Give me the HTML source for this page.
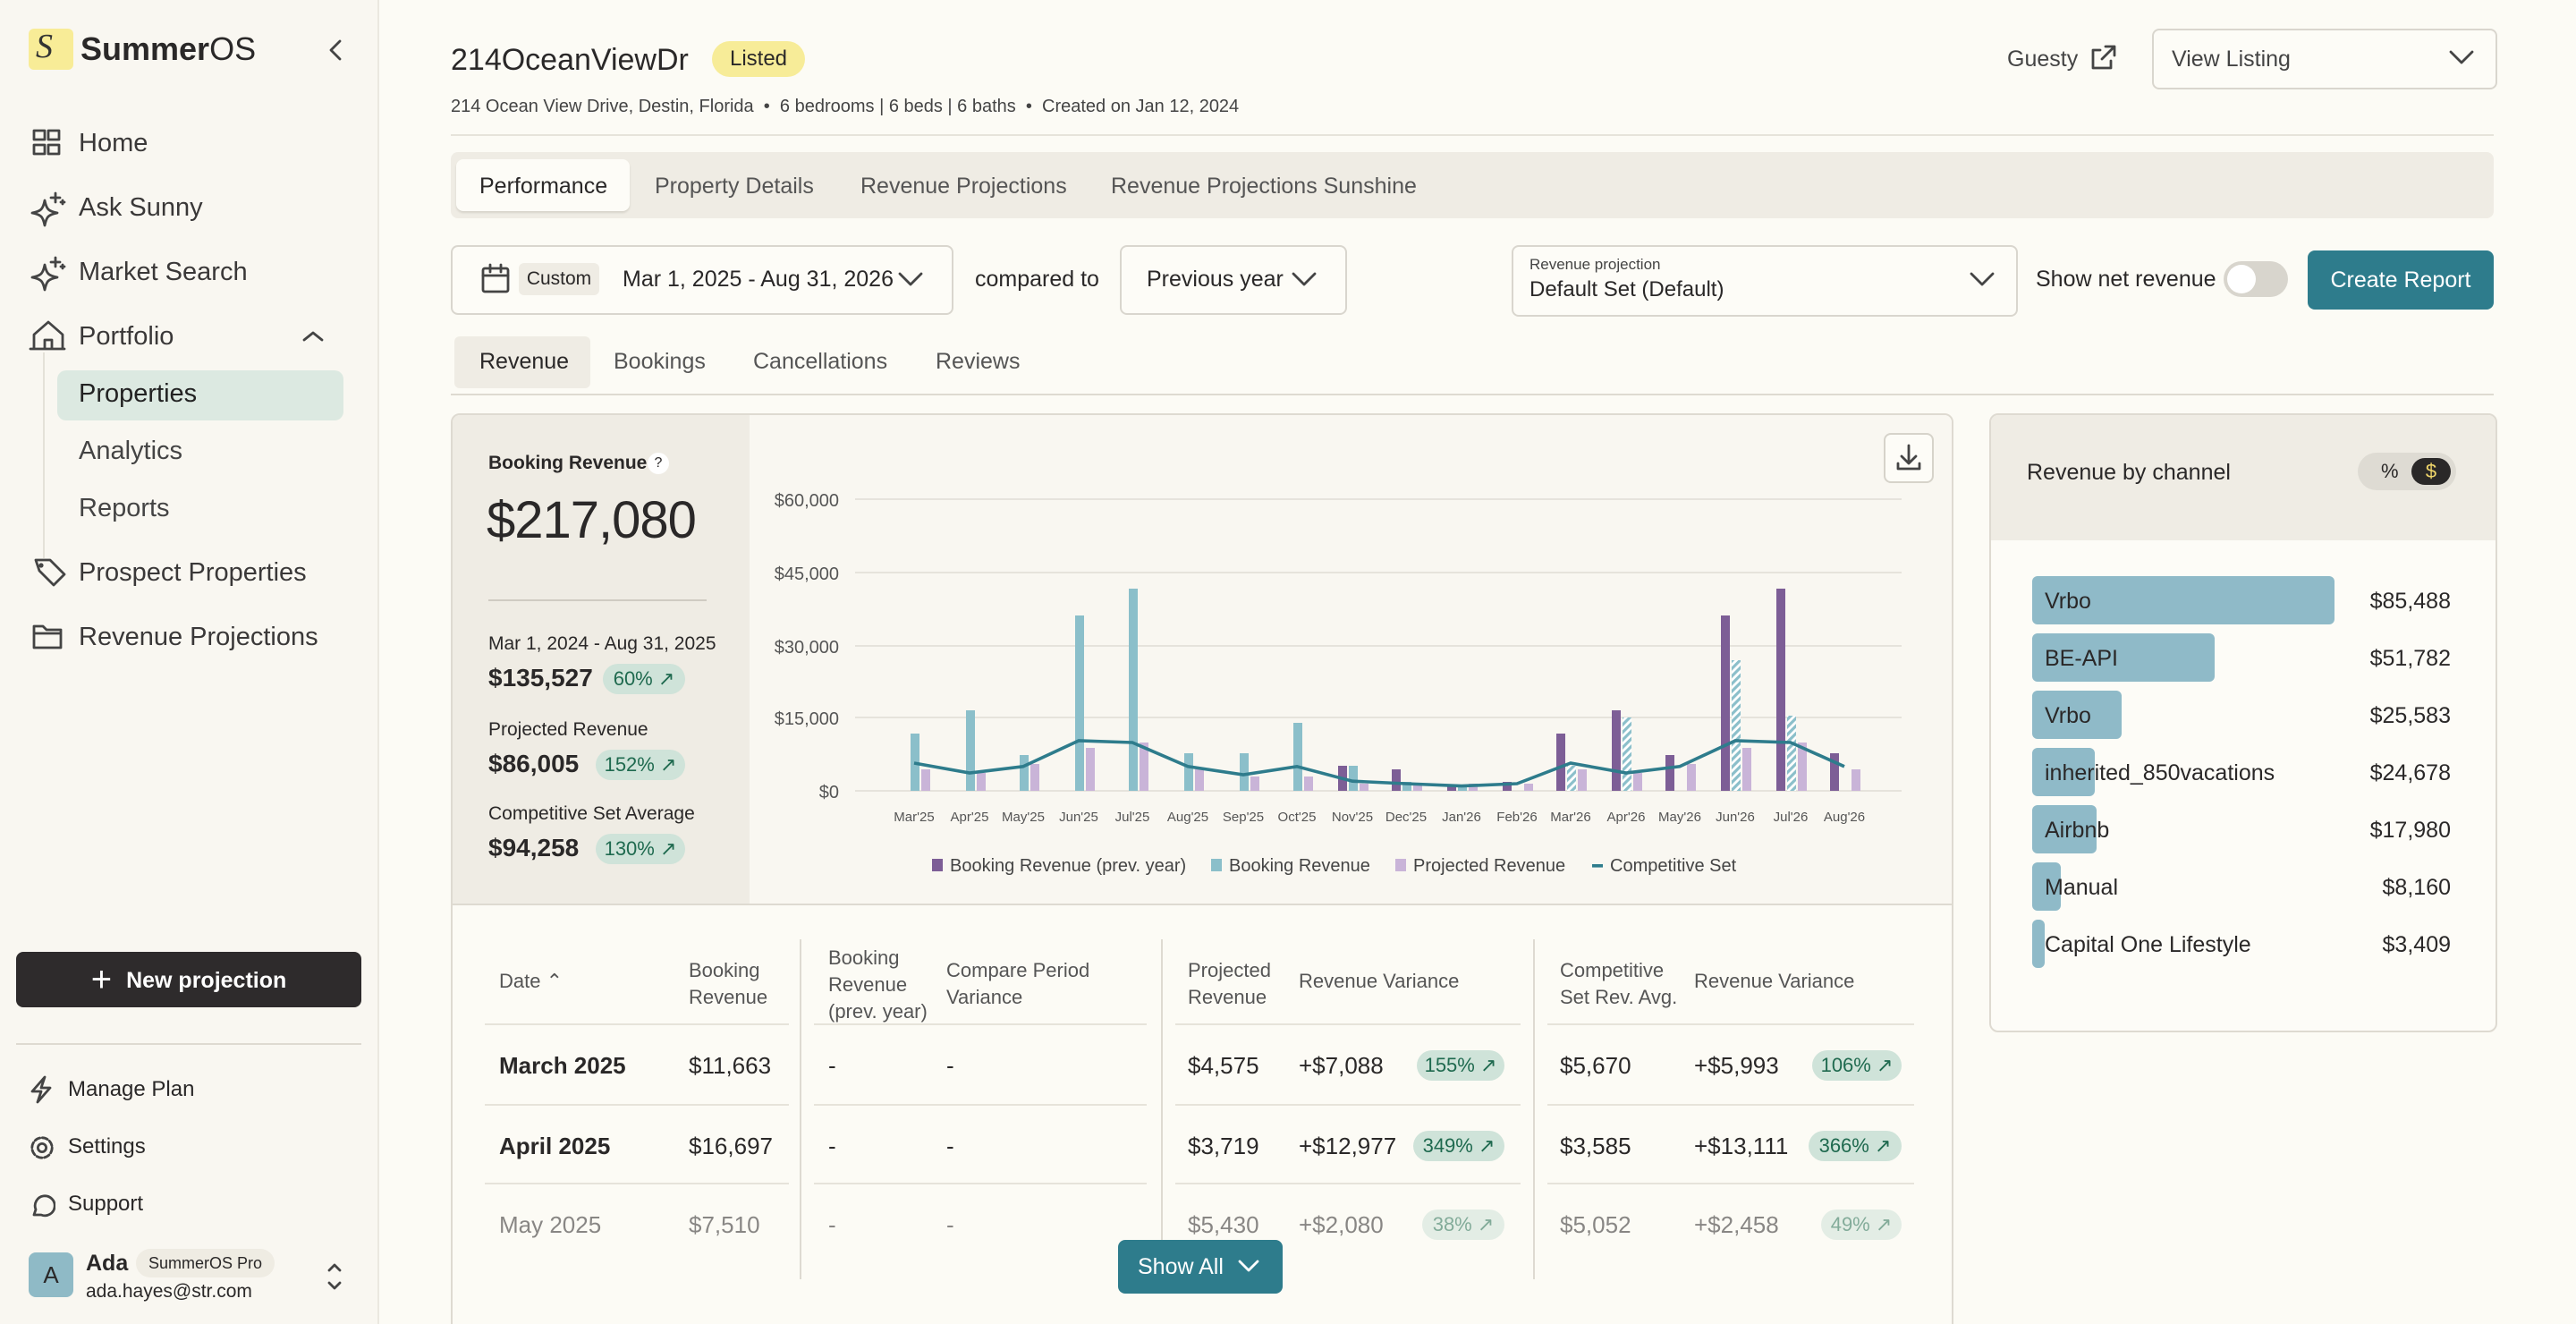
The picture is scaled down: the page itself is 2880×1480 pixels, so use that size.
<!DOCTYPE html>
<html><head><meta charset="utf-8"><style>
html,body{margin:0;padding:0;width:2880px;height:1480px;overflow:hidden;background:#fcfbf5}
#r{position:relative;width:1440px;height:740px;zoom:2;font-family:"Liberation Sans",sans-serif;color:#2a2828;overflow:hidden}
.a{position:absolute;white-space:nowrap}
.side{position:absolute;left:0;top:0;width:211px;height:740px;background:#f9f7f1;border-right:1px solid #ebe8e0}
.nav{position:absolute;left:44px;font-size:14.5px;color:#3a3838}
.ic{position:absolute;fill:none;stroke:#444;stroke-width:1.4;stroke-linecap:round;stroke-linejoin:round}
.box{position:absolute;border:1px solid #d9d6ce;border-radius:4px;background:#fdfcf7}
.g{color:#555}
.badge{position:absolute;background:#cfe3d9;color:#1f6a4f;border-radius:9px;font-size:11px;height:17px;line-height:17px;text-align:center}
.th{position:absolute;font-size:11px;color:#555;line-height:15px}
.td{position:absolute;font-size:13px}
</style></head><body><div id="r">
<div class="side">
 <div class="a" style="left:16px;top:16px;width:25px;height:23px;background:#f8ec97;border-radius:3px"></div>
 <div class="a" style="left:20px;top:15px;font-family:'Liberation Serif',serif;font-style:italic;font-size:19px;color:#333">S</div>
 <div class="a" style="left:45px;top:17px;font-size:18px;font-weight:bold;color:#2a2828">Summer<span style="font-weight:normal">OS</span></div>
 <svg class="ic" style="left:182px;top:21px" width="12" height="14"><path d="M8 2L3 7l5 5"/></svg>
 <svg class="ic" style="left:18px;top:72px" width="16" height="16"><rect x="1" y="1" width="6" height="5"/><rect x="9" y="1" width="6" height="5"/><rect x="1" y="9" width="6" height="5"/><rect x="9" y="9" width="6" height="5"/></svg>
 <div class="nav" style="top:72px">Home</div>
 <svg class="ic" style="left:16px;top:106px" width="22" height="22"><path d="M2 13c5-1 6-2 7-7 1 5 2 6 7 7-5 1-6 2-7 7-1-5-2-6-7-7z"/><path d="M15 2v5M12.5 4.5h5M19 6v2M18 7h2"/></svg>
 <div class="nav" style="top:108px">Ask Sunny</div>
 <svg class="ic" style="left:16px;top:142px" width="22" height="22"><path d="M2 13c5-1 6-2 7-7 1 5 2 6 7 7-5 1-6 2-7 7-1-5-2-6-7-7z"/><path d="M15 2v5M12.5 4.5h5M19 6v2M18 7h2"/></svg>
 <div class="nav" style="top:144px">Market Search</div>
 <svg class="ic" style="left:16px;top:178px" width="22" height="20"><path d="M1 17h19M3 17V9L11 2l8 7v8M9 17v-5h4v5"/></svg>
 <div class="nav" style="top:180px">Portfolio</div>
 <svg class="ic" style="left:168px;top:183px" width="14" height="10"><path d="M2 7l5-4 5 4"/></svg>
 <div class="a" style="left:24px;top:197px;width:1px;height:115px;background:#e4e1d8"></div>
 <div class="a" style="left:32px;top:207px;width:160px;height:28px;background:#dce9e1;border-radius:5px"></div>
 <div class="nav" style="top:212px;color:#222">Properties</div>
 <div class="nav" style="top:244px;color:#444">Analytics</div>
 <div class="nav" style="top:276px;color:#444">Reports</div>
 <svg class="ic" style="left:18px;top:311px" width="20" height="18"><path d="M2 2h8l8 8-6 6-8-8z"/><circle cx="5" cy="5" r="0.6"/></svg>
 <div class="nav" style="top:312px">Prospect Properties</div>
 <svg class="ic" style="left:17px;top:348px" width="20" height="16"><path d="M2 14V2h5l2 2h8v10z M2 6h15"/></svg>
 <div class="nav" style="top:348px">Revenue Projections</div>
 <div class="a" style="left:9px;top:532px;width:193px;height:31px;background:#2e2b2c;border-radius:4px;color:#fff;font-size:12.5px;font-weight:bold;text-align:center;line-height:31px"><span style="font-weight:normal;font-size:20px;vertical-align:-2px;margin-right:8px">+</span>New projection</div>
 <div class="a" style="left:9px;top:583px;width:193px;height:1px;background:#dedad1"></div>
 <svg class="ic" style="left:16px;top:601px" width="14" height="16"><path d="M9 1L2 9h5l-2 6 7-8H7z"/></svg>
 <div class="a" style="left:38px;top:602px;font-size:12px">Manage Plan</div>
 <svg class="ic" style="left:16px;top:634px" width="15" height="15"><circle cx="7.5" cy="7.5" r="2.3"/><circle cx="7.5" cy="7.5" r="5.6" stroke-dasharray="3 1.4"/></svg>
 <div class="a" style="left:38px;top:634px;font-size:12px">Settings</div>
 <svg class="ic" style="left:16px;top:666px" width="15" height="15"><path d="M3 13l1-3A5.5 5.5 0 1 1 7 13z"/></svg>
 <div class="a" style="left:38px;top:666px;font-size:12px">Support</div>
 <div class="a" style="left:16px;top:700px;width:25px;height:25px;background:#8fbac6;border-radius:4px;text-align:center;line-height:25px;font-size:13px">A</div>
 <div class="a" style="left:48px;top:699px;font-size:12.5px;font-weight:bold">Ada</div>
 <div class="a" style="left:76px;top:698px;padding:0 7px;height:16px;line-height:16px;background:#efece3;border-radius:8px;font-size:9px">SummerOS Pro</div>
 <div class="a" style="left:48px;top:716px;font-size:10.5px">ada.hayes@str.com</div>
 <svg class="ic" style="left:181px;top:705px" width="12" height="18"><path d="M3 5l3-3 3 3M3 12l3 3 3-3"/></svg>
</div>

<div class="a" style="left:252px;top:24px;font-size:17px">214OceanViewDr</div>
<div class="a" style="left:398px;top:23px;width:52px;height:20px;background:#f7ec98;border-radius:10px;font-size:12px;text-align:center;line-height:20px">Listed</div>
<div class="a" style="left:252px;top:54px;font-size:10px;color:#444">214 Ocean View Drive, Destin, Florida &nbsp;•&nbsp; 6 bedrooms | 6 beds | 6 baths &nbsp;•&nbsp; Created on Jan 12, 2024</div>
<div class="a" style="left:1122px;top:26px;font-size:12.5px;color:#444">Guesty</div>
<svg class="ic" style="left:1168px;top:24px" width="16" height="16"><path d="M9 2h5v5M14 2L7 9M12 10v4H2V4h4"/></svg>
<div class="box" style="left:1203px;top:16px;width:191px;height:32px"></div>
<div class="a" style="left:1214px;top:26px;font-size:12.5px;color:#444">View Listing</div>
<svg class="ic" style="left:1368px;top:26px" width="16" height="12"><path d="M2 3l6 6 6-6"/></svg>
<div class="a" style="left:252px;top:75px;width:1142px;height:1px;background:#e6e3da"></div>

<div class="a" style="left:252px;top:85px;width:1142px;height:37px;background:#efece4;border-radius:4px"></div>
<div class="a" style="left:255px;top:89px;width:97px;height:29px;background:#fdfcf7;border-radius:4px;box-shadow:0 1px 1px #d6d3ca"></div>
<div class="a" style="left:268px;top:97px;font-size:12.5px">Performance</div>
<div class="a g" style="left:366px;top:97px;font-size:12.5px">Property Details</div>
<div class="a g" style="left:481px;top:97px;font-size:12.5px">Revenue Projections</div>
<div class="a g" style="left:621px;top:97px;font-size:12.5px">Revenue Projections Sunshine</div>

<div class="box" style="left:252px;top:137px;width:279px;height:37px"></div>
<svg class="ic" style="left:268px;top:147px" width="18" height="18"><rect x="2" y="3" width="14" height="13" rx="1"/><path d="M2 7h14M6 1v4M12 1v4"/></svg>
<div class="a" style="left:290px;top:147px;width:45px;height:18px;background:#efece4;border-radius:3px;font-size:10.5px;text-align:center;line-height:18px">Custom</div>
<div class="a" style="left:348px;top:149px;font-size:12.5px">Mar 1, 2025 - Aug 31, 2026</div>
<svg class="ic" style="left:501px;top:150px" width="16" height="12"><path d="M2 3l6 6 6-6"/></svg>
<div class="a" style="left:545px;top:149px;font-size:12.5px">compared to</div>
<div class="box" style="left:626px;top:137px;width:125px;height:37px"></div>
<div class="a" style="left:641px;top:149px;font-size:12.5px">Previous year</div>
<svg class="ic" style="left:721px;top:150px" width="16" height="12"><path d="M2 3l6 6 6-6"/></svg>
<div class="box" style="left:845px;top:137px;width:281px;height:38px"></div>
<div class="a" style="left:855px;top:143px;font-size:8.5px;color:#444">Revenue projection</div>
<div class="a" style="left:855px;top:155px;font-size:12px">Default Set (Default)</div>
<svg class="ic" style="left:1100px;top:150px" width="16" height="12"><path d="M2 3l6 6 6-6"/></svg>
<div class="a" style="left:1138px;top:149px;font-size:12.5px">Show net revenue</div>
<div class="a" style="left:1243px;top:146px;width:36px;height:20px;background:#d8d5cd;border-radius:10px"></div>
<div class="a" style="left:1245px;top:148px;width:16px;height:16px;background:#fff;border-radius:8px"></div>
<div class="a" style="left:1290px;top:140px;width:104px;height:33px;background:#2e7c8c;border-radius:4px;color:#fff;font-size:12.5px;text-align:center;line-height:33px">Create Report</div>

<div class="a" style="left:254px;top:188px;width:76px;height:29px;background:#efece4;border-radius:3px"></div>
<div class="a" style="left:268px;top:195px;font-size:12.5px">Revenue</div>
<div class="a g" style="left:343px;top:195px;font-size:12.5px">Bookings</div>
<div class="a g" style="left:421px;top:195px;font-size:12.5px">Cancellations</div>
<div class="a g" style="left:523px;top:195px;font-size:12.5px">Reviews</div>
<div class="a" style="left:252px;top:220px;width:1142px;height:1px;background:#dedad1"></div>

<div class="a" style="left:252px;top:231px;width:838px;height:520px;border:1px solid #dedad1;border-radius:5px;background:#fcfbf5;overflow:hidden">
 <div class="a" style="left:0;top:0;width:166px;height:273px;background:#efece4"></div>
 <div class="a" style="left:166px;top:0;width:672px;height:273px;background:#f9f7f1"></div>
 <div class="a" style="left:0;top:273px;width:838px;height:1px;background:#dedad1"></div>
</div>
<div class="a" style="left:273px;top:253px;font-size:10.5px;font-weight:bold">Booking Revenue</div>
<div class="a" style="left:362px;top:253px;width:12px;height:12px;border-radius:6px;background:#fff;font-size:8px;text-align:center;line-height:12px">?</div>
<div class="a" style="left:272px;top:274px;font-size:29px;letter-spacing:-0.5px">$217,080</div>
<div class="a" style="left:273px;top:335px;width:122px;height:1px;background:#cfcbc2"></div>
<div class="a" style="left:273px;top:354px;font-size:10.5px">Mar 1, 2024 - Aug 31, 2025</div>
<div class="a" style="left:273px;top:371px;font-size:14px;font-weight:bold">$135,527</div>
<div class="badge" style="left:337px;top:371px;width:46px">60% ↗</div>
<div class="a" style="left:273px;top:402px;font-size:10.5px">Projected Revenue</div>
<div class="a" style="left:273px;top:419px;font-size:14px;font-weight:bold">$86,005</div>
<div class="badge" style="left:333px;top:419px;width:50px">152% ↗</div>
<div class="a" style="left:273px;top:449px;font-size:10.5px">Competitive Set Average</div>
<div class="a" style="left:273px;top:466px;font-size:14px;font-weight:bold">$94,258</div>
<div class="badge" style="left:333px;top:466px;width:50px">130% ↗</div>
<div class="a" style="left:1053px;top:242px;width:26px;height:26px;border:1px solid #d6d3ca;border-radius:4px;background:#fdfcf7"></div>
<svg class="ic" style="left:1058px;top:247px" width="18" height="18"><path d="M9 2v9M5 8l4 4 4-4M3 12v3h12v-3"/></svg>

<svg class="a" style="left:0;top:0" width="1440" height="740" font-family="Liberation Sans, sans-serif">
<defs><pattern id="h" width="3" height="3" patternUnits="userSpaceOnUse" patternTransform="rotate(45)"><rect width="3" height="3" fill="#fff"/><rect width="1.6" height="3" fill="#8bbfca"/></pattern></defs>
<g stroke="#e6e3dc" stroke-width="1"><line x1="478" x2="1063" y1="279" y2="279"/><line x1="478" x2="1063" y1="320" y2="320"/><line x1="478" x2="1063" y1="361" y2="361"/><line x1="478" x2="1063" y1="401" y2="401"/><line x1="478" x2="1063" y1="442" y2="442"/></g>
<g font-size="10" fill="#555" text-anchor="end"><text x="469" y="283">$60,000</text><text x="469" y="324">$45,000</text><text x="469" y="365">$30,000</text><text x="469" y="405">$15,000</text><text x="469" y="446">$0</text></g>
<g font-size="7.5" fill="#555" text-anchor="middle"><text x="511" y="459">Mar'25</text><text x="542" y="459">Apr'25</text><text x="572" y="459">May'25</text><text x="603" y="459">Jun'25</text><text x="633" y="459">Jul'25</text><text x="664" y="459">Aug'25</text><text x="695" y="459">Sep'25</text><text x="725" y="459">Oct'25</text><text x="756" y="459">Nov'25</text><text x="786" y="459">Dec'25</text><text x="817" y="459">Jan'26</text><text x="848" y="459">Feb'26</text><text x="878" y="459">Mar'26</text><text x="909" y="459">Apr'26</text><text x="939" y="459">May'26</text><text x="970" y="459">Jun'26</text><text x="1001" y="459">Jul'26</text><text x="1031" y="459">Aug'26</text></g>
<g fill="#8bbfca">
<rect x="509" y="410" width="5" height="32"/><rect x="540" y="397" width="5" height="45"/><rect x="570" y="422" width="5" height="20"/><rect x="601" y="344" width="5" height="98"/><rect x="631" y="329" width="5" height="113"/><rect x="662" y="421" width="5" height="21"/><rect x="693" y="421" width="5" height="21"/><rect x="723" y="404" width="5" height="38"/><rect x="754" y="428" width="5" height="14"/><rect x="784" y="437" width="5" height="5"/><rect x="815" y="439" width="5" height="3"/>
</g>
<g fill="url(#h)"><rect x="876" y="428" width="5" height="14"/><rect x="907" y="401" width="5" height="41"/><rect x="968" y="369" width="5" height="73"/><rect x="999" y="400" width="5" height="42"/></g>
<g fill="#c9b4d8">
<rect x="515" y="430" width="5" height="12"/><rect x="546" y="432" width="5" height="10"/><rect x="576" y="427" width="5" height="15"/><rect x="607" y="418" width="5" height="24"/><rect x="637" y="415" width="5" height="27"/><rect x="668" y="430" width="5" height="12"/><rect x="699" y="434" width="5" height="8"/><rect x="729" y="434" width="5" height="8"/><rect x="760" y="438" width="5" height="4"/><rect x="790" y="438" width="5" height="4"/><rect x="821" y="438" width="5" height="4"/><rect x="852" y="438" width="5" height="4"/><rect x="882" y="430" width="5" height="12"/><rect x="913" y="432" width="5" height="10"/><rect x="943" y="427" width="5" height="15"/><rect x="974" y="418" width="5" height="24"/><rect x="1005" y="415" width="5" height="27"/><rect x="1035" y="430" width="5" height="12"/>
</g>
<g fill="#7d5e96">
<rect x="748" y="428" width="5" height="14"/><rect x="778" y="430" width="5" height="12"/><rect x="809" y="439" width="5" height="3"/><rect x="840" y="437" width="5" height="5"/><rect x="870" y="410" width="5" height="32"/><rect x="901" y="397" width="5" height="45"/><rect x="931" y="422" width="5" height="20"/><rect x="962" y="344" width="5" height="98"/><rect x="993" y="329" width="5" height="113"/><rect x="1023" y="421" width="5" height="21"/>
</g>
<polyline fill="none" stroke="#2e7c8c" stroke-width="1.8" points="511,426.5 542,432 572,428.4 603,414 633,415 664,428.4 695,433 725,428.4 756,436.6 786,438 817,439.3 848,438 878,426.5 909,432 939,428.4 970,414 1001,415 1031,428.4"/>
<g font-size="10" fill="#444"><rect x="521" y="480" width="6" height="7" fill="#7d5e96"/><text x="531" y="487">Booking Revenue (prev. year)</text><rect x="677" y="480" width="6" height="7" fill="#8bbfca"/><text x="687" y="487">Booking Revenue</text><rect x="780" y="480" width="6" height="7" fill="#c9b4d8"/><text x="790" y="487">Projected Revenue</text><rect x="890" y="483" width="6" height="1.8" fill="#2e7c8c"/><text x="900" y="487">Competitive Set</text></g>
</svg>

<div class="a" style="left:447px;top:525px;width:1px;height:190px;background:#dedad1"></div>
<div class="a" style="left:649px;top:525px;width:1px;height:190px;background:#dedad1"></div>
<div class="a" style="left:857px;top:525px;width:1px;height:190px;background:#dedad1"></div>
<div class="th" style="left:279px;top:541px">Date ⌃</div>
<div class="th" style="left:385px;top:535px">Booking<br>Revenue</div>
<div class="th" style="left:463px;top:528px">Booking<br>Revenue<br>(prev. year)</div>
<div class="th" style="left:529px;top:535px">Compare Period<br>Variance</div>
<div class="th" style="left:664px;top:535px">Projected<br>Revenue</div>
<div class="th" style="left:726px;top:541px">Revenue Variance</div>
<div class="th" style="left:872px;top:535px">Competitive<br>Set Rev. Avg.</div>
<div class="th" style="left:947px;top:541px">Revenue Variance</div>
<div class="a" style="left:271px;top:572px;width:170px;height:1px;background:#e6e3da;box-shadow:0 45px 0 #e6e3da,0 89px 0 #e6e3da"></div>
<div class="a" style="left:455px;top:572px;width:186px;height:1px;background:#e6e3da;box-shadow:0 45px 0 #e6e3da,0 89px 0 #e6e3da"></div>
<div class="a" style="left:657px;top:572px;width:193px;height:1px;background:#e6e3da;box-shadow:0 45px 0 #e6e3da,0 89px 0 #e6e3da"></div>
<div class="a" style="left:865px;top:572px;width:205px;height:1px;background:#e6e3da;box-shadow:0 45px 0 #e6e3da,0 89px 0 #e6e3da"></div>

<div class="td" style="left:279px;top:588px;font-weight:bold">March 2025</div>
<div class="td" style="left:385px;top:588px">$11,663</div><div class="td" style="left:463px;top:588px">-</div><div class="td" style="left:529px;top:588px">-</div>
<div class="td" style="left:664px;top:588px">$4,575</div><div class="td" style="left:726px;top:588px">+$7,088</div><div class="badge" style="left:792px;top:587px;width:49px">155% ↗</div>
<div class="td" style="left:872px;top:588px">$5,670</div><div class="td" style="left:947px;top:588px">+$5,993</div><div class="badge" style="left:1013px;top:587px;width:50px">106% ↗</div>

<div class="td" style="left:279px;top:633px;font-weight:bold">April 2025</div>
<div class="td" style="left:385px;top:633px">$16,697</div><div class="td" style="left:463px;top:633px">-</div><div class="td" style="left:529px;top:633px">-</div>
<div class="td" style="left:664px;top:633px">$3,719</div><div class="td" style="left:726px;top:633px">+$12,977</div><div class="badge" style="left:790px;top:632px;width:51px">349% ↗</div>
<div class="td" style="left:872px;top:633px">$3,585</div><div class="td" style="left:947px;top:633px">+$13,111</div><div class="badge" style="left:1011px;top:632px;width:52px">366% ↗</div>

<div style="opacity:.55">
<div class="td" style="left:279px;top:677px">May 2025</div>
<div class="td" style="left:385px;top:677px">$7,510</div><div class="td" style="left:463px;top:677px">-</div><div class="td" style="left:529px;top:677px">-</div>
<div class="td" style="left:664px;top:677px">$5,430</div><div class="td" style="left:726px;top:677px">+$2,080</div><div class="badge" style="left:795px;top:676px;width:46px">38% ↗</div>
<div class="td" style="left:872px;top:677px">$5,052</div><div class="td" style="left:947px;top:677px">+$2,458</div><div class="badge" style="left:1018px;top:676px;width:45px">49% ↗</div>
</div>
<div class="a" style="left:625px;top:693px;width:92px;height:30px;background:#2e7c8c;border-radius:4px;color:#fff;font-size:12.5px;line-height:30px;padding-left:11px;box-sizing:border-box">Show All</div>
<svg class="ic" style="left:691px;top:702px;stroke:#fff" width="14" height="12"><path d="M2 3l5 5 5-5"/></svg>

<div class="a" style="left:1112px;top:231px;width:282px;height:344px;border:1px solid #dedad1;border-radius:5px;background:#fdfcf7;overflow:hidden">
 <div class="a" style="left:0;top:0;width:282px;height:70px;background:#efece4"></div>
</div>
<div class="a" style="left:1133px;top:257px;font-size:12.5px">Revenue by channel</div>
<div class="a" style="left:1318px;top:253px;width:55px;height:21px;background:#dedbd3;border-radius:11px"></div>
<div class="a" style="left:1331px;top:257px;font-size:11px">%</div>
<div class="a" style="left:1348px;top:256px;width:22px;height:15px;background:#2a2828;border-radius:8px;color:#f1d76b;font-size:11px;text-align:center;line-height:15px">$</div>
<div class="a" style="left:1136px;top:322px;width:169px;height:27px;background:#8fbac8;border-radius:3px"></div>
<div class="a" style="left:1136px;top:354px;width:102px;height:27px;background:#8fbac8;border-radius:3px"></div>
<div class="a" style="left:1136px;top:386px;width:50px;height:27px;background:#8fbac8;border-radius:3px"></div>
<div class="a" style="left:1136px;top:418px;width:35px;height:27px;background:#8fbac8;border-radius:3px"></div>
<div class="a" style="left:1136px;top:450px;width:36px;height:27px;background:#8fbac8;border-radius:3px"></div>
<div class="a" style="left:1136px;top:482px;width:16px;height:27px;background:#8fbac8;border-radius:3px"></div>
<div class="a" style="left:1136px;top:514px;width:7px;height:27px;background:#8fbac8;border-radius:3px"></div>
<div style="font-size:12.5px">
<div class="a" style="left:1143px;top:329px">Vrbo</div><div class="a" style="right:70px;top:329px">$85,488</div>
<div class="a" style="left:1143px;top:361px">BE-API</div><div class="a" style="right:70px;top:361px">$51,782</div>
<div class="a" style="left:1143px;top:393px">Vrbo</div><div class="a" style="right:70px;top:393px">$25,583</div>
<div class="a" style="left:1143px;top:425px">inherited_850vacations</div><div class="a" style="right:70px;top:425px">$24,678</div>
<div class="a" style="left:1143px;top:457px">Airbnb</div><div class="a" style="right:70px;top:457px">$17,980</div>
<div class="a" style="left:1143px;top:489px">Manual</div><div class="a" style="right:70px;top:489px">$8,160</div>
<div class="a" style="left:1143px;top:521px">Capital One Lifestyle</div><div class="a" style="right:70px;top:521px">$3,409</div>
</div>
</div></body></html>
